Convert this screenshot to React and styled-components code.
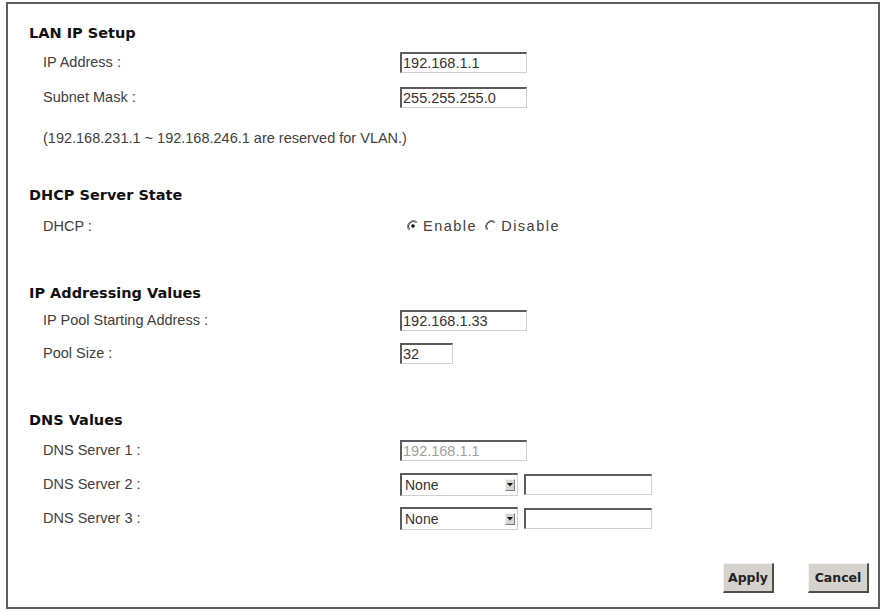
import React from 'react';
import styled, { createGlobalStyle } from 'styled-components';

const GlobalStyle = createGlobalStyle`
  body {
    margin: 0;
    background: #fff;
  }
`;

const Frame = styled.div`
  box-sizing: border-box;
  width: 874px;
  height: 607px;
  margin: 2px 0 0 6px;
  border: 2px solid #5e5e5e;
  padding: 0 9px 0 21px;
  display: flex;
  flex-direction: column;
  font-family: "Liberation Sans", Arial, sans-serif;
  color: #404040;
`;

const Heading = styled.div`
  height: 24px;
  line-height: 24px;
  margin-top: ${({ top }) => top}px;
  font-family: "DejaVu Sans", Verdana, sans-serif;
  font-weight: bold;
  font-size: 14.5px;
  color: #111;
`;

const Fields = styled.div`
  display: flex;
  flex-direction: column;
  margin-top: ${({ top }) => top}px;
  gap: ${({ gap }) => gap}px;
`;

const Row = styled.div`
  display: grid;
  grid-template-columns: 357px auto;
  align-items: center;
  height: 30px;
  padding-left: 14px;
  font-size: 14.5px;
`;

const Note = styled.div`
  height: 20px;
  line-height: 20px;
  margin-top: 16px;
  padding-left: 14px;
  font-size: 14.5px;
`;

const Value = styled.div`
  display: flex;
  align-items: center;
  gap: 6px;
`;

const TextBox = styled.input`
  box-sizing: border-box;
  width: ${({ w }) => w}px;
  height: 21px;
  margin: 0;
  padding: 0 0 0 1px;
  border: 1px solid #cfcfcf;
  border-top: 2px solid #5c5c5c;
  border-left: 2px solid #5c5c5c;
  background: #fff;
  font-family: "Liberation Sans", Arial, sans-serif;
  font-size: 14.5px;
  color: ${({ disabled }) => (disabled ? '#a0a0a0' : '#333')};
  outline: none;
`;

const Select = styled.div`
  box-sizing: border-box;
  width: 118px;
  height: 23px;
  display: flex;
  align-items: center;
  justify-content: space-between;
  padding: 0 2px 0 3px;
  border: 1px solid #cfcfcf;
  border-top: 2px solid #5c5c5c;
  border-left: 2px solid #5c5c5c;
  font-size: 14px;
  color: #333;
`;

const ArrowButton = styled.div`
  box-sizing: border-box;
  width: 10px;
  height: 12px;
  display: flex;
  align-items: center;
  justify-content: center;
  background: #d8d6d2;
  border: 1px solid #f4f4f4;
  border-right-color: #7a7a7a;
  border-bottom-color: #7a7a7a;
`;

const RadioGroup = styled.div`
  display: flex;
  align-items: center;
  padding-left: 7px;
  font-size: 14.5px;
  letter-spacing: 1.5px;
`;

const RadioOption = styled.label`
  display: flex;
  align-items: center;
  gap: 4px;
  margin-right: 8px;
`;

const ButtonBar = styled.div`
  display: flex;
  justify-content: flex-end;
  gap: 34px;
  margin-top: 30px;
`;

const Button = styled.button`
  box-sizing: border-box;
  width: ${({ w }) => w}px;
  height: 30px;
  padding: 0;
  background: #d6d3ce;
  border: 1px solid #f2f2f2;
  border-right: 2px solid #4e4e4e;
  border-bottom: 2px solid #4e4e4e;
  font-family: "DejaVu Sans", Verdana, sans-serif;
  font-weight: bold;
  font-size: 12.5px;
  color: #222;
`;

const Radio = ({ checked }) => (
  <svg width="12" height="12" viewBox="0 0 12 12">
    <path d="M10.2 1.8 A6 6 0 0 0 1.8 10.2" fill="none" stroke="#8a8a8a" strokeWidth="1" />
    <path d="M9.5 2.5 A5 5 0 0 0 2.5 9.5" fill="none" stroke="#333" strokeWidth="1" />
    <path d="M1.8 10.2 A6 6 0 0 0 10.2 1.8" fill="none" stroke="#eee" strokeWidth="1" />
    {checked && <circle cx="6" cy="6" r="1.8" fill="#111" />}
  </svg>
);

const DnsSelect = () => (
  <Value>
    <Select>
      <span>None</span>
      <ArrowButton>
        <svg width="6" height="4" viewBox="0 0 6 4">
          <path d="M0 0 H6 L3 3.5 Z" fill="#111" />
        </svg>
      </ArrowButton>
    </Select>
    <TextBox w={128} readOnly value="" />
  </Value>
);

export default function App() {
  return (
    <>
      <GlobalStyle />
      <Frame>
        <Heading top={17}>LAN IP Setup</Heading>
        <Fields top={2} gap={5}>
          <Row>
            <span>IP Address :</span>
            <Value><TextBox w={127} readOnly value="192.168.1.1" /></Value>
          </Row>
          <Row>
            <span>Subnet Mask :</span>
            <Value><TextBox w={127} readOnly value="255.255.255.0" /></Value>
          </Row>
        </Fields>
        <Note>(192.168.231.1 ~ 192.168.246.1 are reserved for VLAN.)</Note>

        <Heading top={35}>DHCP Server State</Heading>
        <Fields top={4} gap={0}>
          <Row>
            <span>DHCP :</span>
            <RadioGroup>
              <RadioOption><Radio checked />Enable</RadioOption>
              <RadioOption><Radio />Disable</RadioOption>
            </RadioGroup>
          </Row>
        </Fields>

        <Heading top={40}>IP Addressing Values</Heading>
        <Fields top={0} gap={3}>
          <Row>
            <span>IP Pool Starting Address :</span>
            <Value><TextBox w={127} readOnly value="192.168.1.33" /></Value>
          </Row>
          <Row>
            <span>Pool Size :</span>
            <Value><TextBox w={53} readOnly value="32" /></Value>
          </Row>
        </Fields>

        <Heading top={40}>DNS Values</Heading>
        <Fields top={3} gap={4}>
          <Row>
            <span>DNS Server 1 :</span>
            <Value><TextBox w={127} disabled value="192.168.1.1" /></Value>
          </Row>
          <Row>
            <span>DNS Server 2 :</span>
            <DnsSelect />
          </Row>
          <Row>
            <span>DNS Server 3 :</span>
            <DnsSelect />
          </Row>
        </Fields>

        <ButtonBar>
          <Button w={51}>Apply</Button>
          <Button w={61}>Cancel</Button>
        </ButtonBar>
      </Frame>
    </>
  );
}
